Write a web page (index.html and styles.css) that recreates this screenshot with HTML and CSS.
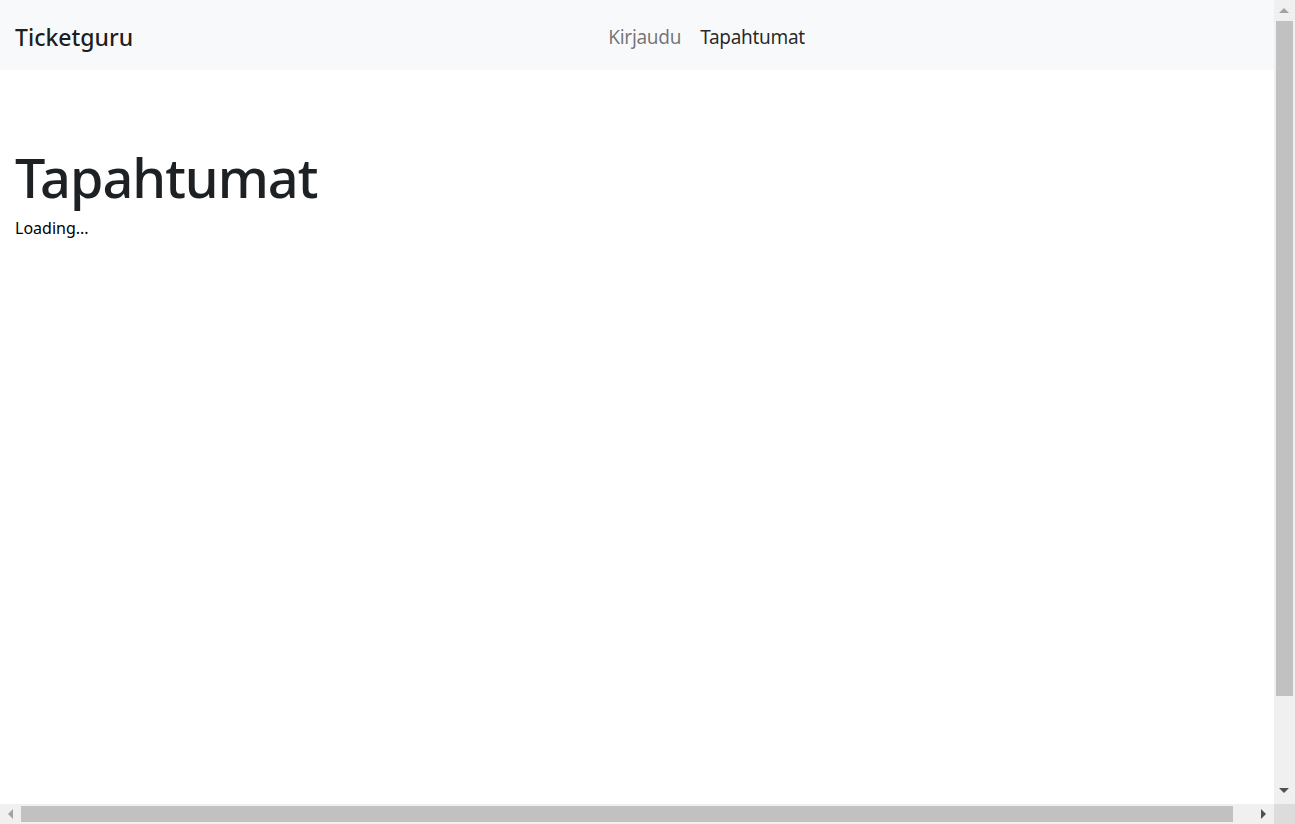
FILE: index.html
```html
<!DOCTYPE html>
<html lang="fi">
<head>
<meta charset="utf-8">
<title>Ticketguru</title>
<link rel="stylesheet" href="styles.css">
</head>
<body>
<div class="page">
  <nav class="navbar">
    <a class="brand" href="#">Ticketguru</a>
    <div class="nav">
      <a class="nav-link" href="#">Kirjaudu</a>
      <a class="nav-link active" href="#">Tapahtumat</a>
    </div>
  </nav>
  <main class="content">
    <h1 class="title">Tapahtumat</h1>
    <p class="loading">Loading...</p>
  </main>
</div>
<div class="vscroll">
  <div class="arrow-up"></div>
  <div class="vthumb"></div>
  <div class="arrow-down"></div>
</div>
<div class="hscroll">
  <div class="arrow-left"></div>
  <div class="hthumb"></div>
  <div class="arrow-right"></div>
</div>
<div class="corner"></div>
</body>
</html>
```
FILE: styles.css
```css
html, body {
  margin: 0;
  padding: 0;
  height: 100%;
  overflow: hidden;
  background: #fff;
}
body {
  font-family: "Noto Sans", "Open Sans", sans-serif;
  color: #212529;
}
.page {
  width: 1274px;
  height: 804px;
}
.navbar {
  display: flex;
  align-items: center;
  height: 70px;
  padding: 3px 15px 0;
  background: #f8f9fa;
  box-sizing: border-box;
}
.brand {
  font-size: 23px;
  font-weight: 500;
  color: rgba(0,0,0,.9);
  text-decoration: none;
  margin-right: 16px;
}
.nav {
  flex: 1;
  display: flex;
  justify-content: center;
  gap: 3px;
  padding-left: 5px;
}
.nav-link {
  font-size: 19px;
  color: rgba(0,0,0,.55);
  text-decoration: none;
  padding: 0 8px;
  letter-spacing: -0.3px;
}
.nav-link.active {
  color: rgba(0,0,0,.85);
}
.content {
  padding: 75px 15px 0;
}
.title {
  margin: 0 0 6px;
  font-size: 54px;
  font-weight: 500;
  line-height: 1.2;
  letter-spacing: -1px;
  color: #1d2124;
}
.loading {
  margin: 0;
  font-size: 16px;
  line-height: 1.5;
  color: #000;
}
.vscroll {
  position: fixed;
  right: 0;
  top: 0;
  width: 21px;
  height: 804px;
  background: #f0f0f0;
}
.vthumb {
  position: absolute;
  left: 2px;
  right: 2px;
  top: 21px;
  height: 675px;
  background: #c1c1c1;
}
.arrow-up {
  position: absolute;
  left: 5px;
  top: 8px;
  width: 0;
  height: 0;
  border-left: 5px solid transparent;
  border-right: 5px solid transparent;
  border-bottom: 5px solid #a3a3a3;
}
.arrow-down {
  position: absolute;
  left: 5px;
  bottom: 11px;
  width: 0;
  height: 0;
  border-left: 5px solid transparent;
  border-right: 5px solid transparent;
  border-top: 5px solid #505050;
}
.hscroll {
  position: fixed;
  left: 0;
  bottom: 0;
  width: 1274px;
  height: 20px;
  background: #f0f0f0;
}
.hthumb {
  position: absolute;
  top: 2px;
  bottom: 2px;
  left: 21px;
  width: 1212px;
  background: #c1c1c1;
}
.arrow-left {
  position: absolute;
  left: 8px;
  top: 5px;
  width: 0;
  height: 0;
  border-top: 5px solid transparent;
  border-bottom: 5px solid transparent;
  border-right: 5px solid #a3a3a3;
}
.arrow-right {
  position: absolute;
  right: 8px;
  top: 5px;
  width: 0;
  height: 0;
  border-top: 5px solid transparent;
  border-bottom: 5px solid transparent;
  border-left: 5px solid #505050;
}
.corner {
  position: fixed;
  right: 0;
  bottom: 0;
  width: 21px;
  height: 20px;
  background: #dcdcdc;
}
```
